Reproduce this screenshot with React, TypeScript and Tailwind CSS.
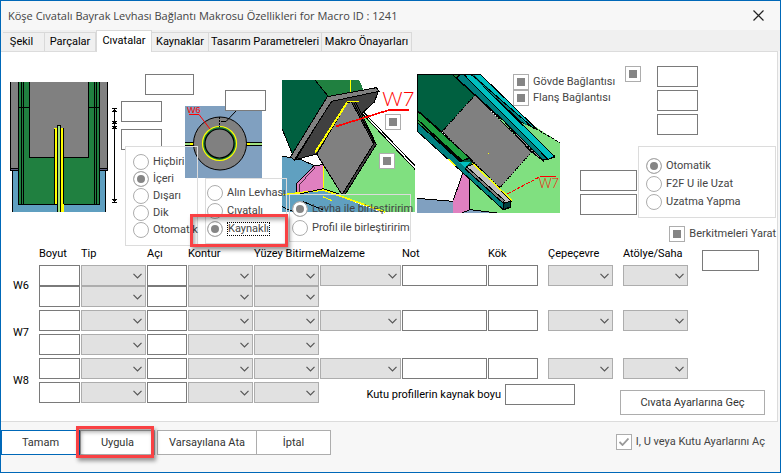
import { useState } from "react"
import type { ReactNode } from "react"

const tabs = [
  { name: "Şekil", className: "w-[42px] pr-1" },
  { name: "Parçalar", className: "w-[51px]" },
  { name: "Cıvatalar", className: "w-[56px]" },
  { name: "Kaynaklar", className: "w-[57px]" },
  { name: "Tasarım Parametreleri", className: "w-[113px]" },
  { name: "Makro Önayarları", className: "w-[90px]" },
]

const weldGrid =
  "grid grid-cols-[25px_41px_65px_40px_65px_65px_81px_minmax(85px,1fr)_50px_8px_65px_8px_65px] gap-x-px"

const TextBox = ({ label, className = "" }: { label: string; className?: string }) => (
  <input
    type="text"
    aria-label={label}
    className={`block h-[21px] border border-[#7a7a7a] bg-white px-1 outline-none ${className}`}
  />
)

const Dropdown = ({ label, className = "" }: { label: string; className?: string }) => (
  <div className={`relative h-[21px] ${className}`}>
    <select
      aria-label={label}
      className="block h-full w-full appearance-none border border-[#adadad] bg-[#e1e1e1] px-1 outline-none"
    />
    <svg
      className="pointer-events-none absolute right-1 top-2 h-[6px] w-[9px]"
      viewBox="0 0 9 6"
      fill="none"
      stroke="#555"
      strokeWidth="1.2"
    >
      <path d="M.5 .8 4.5 4.8 8.5 .8" />
    </svg>
  </div>
)

const markClass =
  "block h-4 w-4 shrink-0 appearance-none border border-[#adadad] bg-white checked:bg-[#858585] checked:shadow-[inset_0_0_0_3px_white]"

const Radio = ({
  name,
  checked,
  children,
  className = "",
}: {
  name: string
  checked?: boolean
  children: ReactNode
  className?: string
}) => (
  <label className={`flex items-center gap-1 whitespace-nowrap text-[#444] ${className}`}>
    <input type="radio" name={name} defaultChecked={checked} className={`rounded-full ${markClass}`} />
    {children}
  </label>
)

const Check = ({ label, hideLabel }: { label: string; hideLabel?: boolean }) => (
  <label className="flex items-center gap-1 whitespace-nowrap text-[#444]">
    <input type="checkbox" defaultChecked aria-label={label} className={markClass} />
    {!hideLabel && label}
  </label>
)

const Highlight = ({ className }: { className: string }) => (
  <div
    className={`pointer-events-none absolute z-20 border-3 border-[#f94144] shadow-[2px_3px_4px_rgba(0,0,0,0.4),inset_2px_3px_4px_rgba(0,0,0,0.35)] ${className}`}
  />
)

const FrontView = () => (
  <svg className="h-[130px] w-[98px]" viewBox="0 0 98 130" shapeRendering="crispEdges">
    <path d="M2 88h94v42H2z" fill="#5f9fc0" />
    <path d="M2.5 88v42M95.5 88v42" stroke="#000" />
    <path d="M0 0h98v89H0z" fill="#808080" />
    <path d="M0 86h98v3H0z" fill="#606080" />
    <path d="M.5 0v89M97.5 0v89M0 86.5h98M0 88.5h98" stroke="#000" />
    <path d="M8 0h82v122H8z" fill="#208040" />
    <path d="M19 0h60v76H19z" fill="#808080" />
    <path
      d="M19.5 0v75.5h59V0M8.5 0v122.5h81V0M11.5 0v122M13.5 0v122M84.5 0v122M86.5 0v122M8 25.5h11M79 25.5h11"
      fill="none"
      stroke="#000"
    />
    <path d="M44 46h10v84h-7v-8h-3z" fill="#ff0" />
    <path d="M44.5 122V46.5M53.5 46v76" stroke="#000" />
    <path d="M47 43h4v87h-4z" fill="#000" />
    <path d="M48 44h2v86h-2z" fill="#a0e080" />
  </svg>
)

const DimensionArrows = () => (
  <svg className="h-[98px] w-[13px]" viewBox="0 0 13 98" shapeRendering="crispEdges" stroke="#000">
    <path d="M6.5 1v95M4 1.5h5M4 16.5h5M4 19.5h5M4 95.5h5" />
    <path d="M3 5h7L6.5 2zM3 14h7l-3.5 3zM3 22h7l-3.5-3zM3 92h7l-3.5 3z" strokeWidth="0" />
  </svg>
)

const PipeView = () => (
  <svg className="h-[72px] w-[77px]" viewBox="0 0 77 72">
    <path d="M0 0h77v72H0z" fill="#80a0c0" />
    <path d="M-1 36.5h79v3H-1z" fill="#a0e080" stroke="#000" />
    <path d="M5 37h4v2H5zM62 37h3v2h-3z" fill="#ff0" />
    <circle cx="35" cy="37.5" r="26.5" fill="#808080" stroke="#000" />
    <circle cx="34.5" cy="37.5" r="17" fill="#208040" stroke="#ff0" strokeWidth="1.2" />
    <circle cx="34.5" cy="37.5" r="14.5" fill="#808080" stroke="#000" strokeWidth="1.2" />
    <path d="M34.5 11v10" stroke="#000" strokeDasharray="2 1" />
    <path d="M36 15.5h5L51 5" fill="none" stroke="#000" />
    <path d="M4 8.5h10L25 23" fill="none" stroke="red" />
    <text x="2" y="7" fontSize="9" fill="red" fontFamily="Liberation Sans, sans-serif">W6</text>
  </svg>
)

const PlateView = () => (
  <svg
    className="h-[132px] w-[133px] overflow-visible"
    viewBox="306 60 399 396"
    strokeWidth="3"
    shapeRendering="crispEdges"
  >
    <path d="M306 60h99l42 50-107 178-34-82z" fill="#006040" />
    <path d="M405 60h132l14 30-107 20z" fill="#208040" />
    <path d="m405 60 42 52M306 206l34 82" stroke="#000" />
    <path d="M510 60v36" stroke="#ff0" />
    <path d="m306 288 60 12 35 16 29 0v75l170 65H306z" fill="#60a0c0" />
    <path d="m306 288 60 12 35 16h29" fill="none" stroke="#000" />
    <path d="m430 312 100-172 175 187v129H605l-175-66z" fill="#80e080" />
    <path d="m527 140 178 188M540 145l165 172" fill="none" stroke="#000" />
    <path d="m402 317 28-3v74l-82 15v-30z" fill="#e080c0" stroke="#000" />
    <path d="m357 404v-28l50-56" fill="none" stroke="#000" strokeWidth="2" />
    <path d="M430 315v75l-120 14M430 390l185 66" fill="none" stroke="#ff0" strokeWidth="5" />
    <path d="m306 440 32 14M350 404l80-18 56 19M370 425l60 25" fill="none" stroke="#000" />
    <path d="m428 410 28 12" stroke="#ff0" />
    <path d="m453 122 142-28-12 32-170 155-66 18z" fill="#404040" stroke="#000" />
    <path d="m416 283-4 14 18 16v-24z" fill="#fff" />
    <path d="m442 110 147-27 8 11-142 30-112 176-11-10z" fill="#808080" stroke="#000" />
    <path d="m512 125 13-2 64 130-94 151-10 0z" fill="#404040" stroke="#000" />
    <path d="m502 128 12-3 67 126-95 153-76-122z" fill="#808080" stroke="#000" />
    <path d="m521 128 63 121" stroke="#000" />
    <path d="M501 128 405 278" stroke="#ff0" strokeWidth="6" />
    <path d="M502 123h34" stroke="#ff0" />
    <path d="m469 199 158-49h60" fill="none" stroke="red" strokeWidth="5" />
    <text x="607" y="139" fontSize="60" fontWeight="300" fill="red" fontFamily="Lato, sans-serif">
      W7
    </text>
  </svg>
)

const BeamView = () => (
  <svg
    className="h-[139px] w-[143px]"
    viewBox="51 42 429 417"
    strokeWidth="3"
    shapeRendering="crispEdges"
  >
    <path d="m300 140 60 30 120 78v211H208V330z" fill="#80e080" />
    <path d="m345 170 135 78" stroke="#000" strokeDasharray="9 5" />
    <path d="m190 335 18 20v104h-50v-38z" fill="#e080c0" />
    <path d="m190 335-30 85M158 459v-35M208 355v95" stroke="#000" />
    <path d="m51 415 107 9v35H51zM185 459l25-10 80 10z" fill="#80a0c0" />
    <path d="m51 415 107 9M185 459l25-10 80 10" fill="none" stroke="#000" />
    <path d="M51 42h110l70 65-105 108-75-65z" fill="#006040" stroke="#000" />
    <path d="m315 188 90 85 32 15-7 15-36-28z" fill="#a0a0a0" stroke="#000" />
    <path d="M155 42h25l170 155-50-22z" fill="#208040" stroke="#000" />
    <path d="m225 105 170 171-95 107-174-168z" fill="#808080" stroke="#000" strokeDasharray="6 2" />
    <path d="m310 190 95 90" stroke="#000" strokeDasharray="6 4" />
    <path d="M181 42h25l257 250-34 8-115-115-144-131z" fill="#008080" stroke="#000" />
    <path d="M190 42h22l252 247-20 9z" fill="#00c0c0" stroke="#000" />
    <path d="M212 42h28l172 167-50-24z" fill="#00c0c0" stroke="#000" />
    <path d="m220 47 160 148" stroke="#008080" strokeWidth="6" />
    <path d="m213 42 188 163" stroke="#000" />
    <path d="m51 152 156 140-20 14L51 187z" fill="#20a040" stroke="#000" />
    <path d="m51 177 135 124 24-5 10 18-20 6z" fill="#006040" stroke="#000" />
    <path d="m51 187 146 133 135 103-2 20-20 6L51 213z" fill="#008080" stroke="#000" />
    <path d="m175 305 35 1-15 15z" fill="#00c0c0" />
    <path d="m200 320 20-8 115 111-20 7z" fill="#c0c0c0" stroke="#000" />
    <path d="m197 328 113 102 3-9-113-101z" fill="#808080" stroke="#000" />
    <path d="m310 430 22-6v16l-20 8z" fill="#004040" stroke="#000" />
    <path d="m217 310 120 112" stroke="#ff0" strokeWidth="4" />
    <path d="m145 297 22 21" stroke="#ff0" />
    <path d="M264 281h3" stroke="#ff0" />
    <path d="m322 402 98-52" stroke="red" strokeDasharray="12 4" />
    <path d="M420 350h48" stroke="red" />
    <text x="416" y="385" fontSize="38" fontWeight="300" fill="red" fontFamily="Lato, sans-serif">W7</text>
  </svg>
)

const WeldRows = ({ name, tight }: { name: string; tight?: boolean }) => (
  <div className={`${weldGrid} ${tight ? "" : "gap-y-[3px]"}`}>
    <span className="row-span-2 self-center">{name}</span>
    <TextBox label={`${name} Boyut 1`} />
    <Dropdown label={`${name} Tip 1`} />
    <TextBox label={`${name} Açı 1`} />
    <Dropdown label={`${name} Kontur 1`} />
    <Dropdown label={`${name} Yüzey Bitirme 1`} />
    <Dropdown label={`${name} Malzeme`} />
    <TextBox label={`${name} Not`} className="w-full" />
    <TextBox label={`${name} Kök`} />
    <Dropdown label={`${name} Çepeçevre`} className="col-start-11" />
    <Dropdown label={`${name} Atölye/Saha`} className="col-start-13" />
    <TextBox label={`${name} Boyut 2`} className="col-start-2" />
    <Dropdown label={`${name} Tip 2`} />
    <TextBox label={`${name} Açı 2`} />
    <Dropdown label={`${name} Kontur 2`} />
    <Dropdown label={`${name} Yüzey Bitirme 2`} />
  </div>
)

const Connection = () => (
  <section className="flex items-start pl-[9px] pt-[14px]">
    <div className="mt-4 shrink-0">
      <FrontView />
    </div>
    <div className="mt-[41px] shrink-0">
      <DimensionArrows />
    </div>

    <div className="relative mt-2 w-[73px] shrink-0">
      <TextBox label="Levha kalınlığı" className="ml-6 w-[49px]" />
      <TextBox label="Üst mesafe" className="mt-1.5 w-[41px]" />
      <TextBox label="Alt mesafe" className="mt-[7px] w-[41px]" />
      <fieldset className="absolute left-1 top-[72px] z-10 w-[73px] min-w-0 border border-[#dcdcdc]">
        <div className="flex w-[59px] flex-col gap-px bg-white py-[7px] pl-[7px]">
          <Radio name="side">Hiçbiri</Radio>
          <Radio name="side" checked>İçeri</Radio>
          <Radio name="side">Dışarı</Radio>
          <Radio name="side">Dik</Radio>
          <Radio name="side">Otomatik</Radio>
        </div>
      </fieldset>
    </div>

    <div className="relative -ml-[9px] mt-10 shrink-0">
      <PipeView />
      <TextBox label="Boru payı" className="absolute -top-4 left-10 w-[41px]" />
      <fieldset className="absolute left-5 top-[72px] z-10 flex w-[82px] min-w-0 flex-col gap-[2px] border border-[#dcdcdc] py-[6px] pl-[1px]">
        <Radio name="endType">Alın Levhası</Radio>
        <Radio name="endType">Cıvatalı</Radio>
        <Radio name="endType" checked>
          <span className="border border-dotted border-black leading-3">Kaynaklı</span>
        </Radio>
      </fieldset>
      <Highlight className="left-[5px] top-[108px] h-[33px] w-[98px]" />
    </div>

    <div className="relative ml-5 mt-3.5 shrink-0">
      <PlateView />
      <div className="absolute left-[103px] top-[34px]">
        <Check label="Levha üst kaynağı" hideLabel />
      </div>
      <div className="absolute left-[97px] top-[73px]">
        <Check label="Levha alt kaynağı" hideLabel />
      </div>
      <fieldset className="absolute left-[7px] top-[114px] z-10 flex w-[122px] min-w-0 flex-col gap-[3px] border border-[#dcdcdc] pb-[5px] pl-[2px] pt-[6px]">
        <Radio name="joinBy" checked>Levha ile birleştiririm</Radio>
        <Radio name="joinBy">Profil ile birleştiririm</Radio>
      </fieldset>
    </div>

    <div className="relative ml-[2px] mt-2 shrink-0">
      <BeamView />
      <div className="absolute left-24 top-0 flex flex-col">
        <Check label="Gövde Bağlantısı" />
        <Check label="Flanş Bağlantısı" />
      </div>
    </div>

    <div className="grow pr-px">
      <div className="flex items-start gap-4 pl-[65px]">
        <Check label="Berkitme payı" hideLabel />
        <div className="flex flex-col gap-[3px]">
          <TextBox label="Pay 1" className="w-[41px]" />
          <TextBox label="Pay 2" className="w-[41px]" />
          <TextBox label="Pay 3" className="w-[41px]" />
        </div>
      </div>
      <div className="mt-[11px] flex items-start gap-px pl-5">
        <div className="mt-6 flex flex-col gap-[3px]">
          <TextBox label="Uzatma 1" className="w-[57px]" />
          <TextBox label="Uzatma 2" className="w-[57px]" />
        </div>
        <fieldset className="flex grow flex-col gap-[2px] border border-[#dcdcdc] pb-[7px] pl-[7px] pt-[11px]">
          <Radio name="extend" checked>Otomatik</Radio>
          <Radio name="extend">F2F U ile Uzat</Radio>
          <Radio name="extend">Uzatma Yapma</Radio>
        </fieldset>
      </div>
      <div className="mt-2 flex justify-end">
        <Check label="Berkitmeleri Yarat" />
      </div>
    </div>
  </section>
)

const Welds = () => (
  <section className="pb-1.5 pl-[12px] pr-[19px]">
    <div className="flex items-start gap-[14px]">
      <div className="grow">
        <div className={`${weldGrid} h-[23px] items-center whitespace-nowrap`}>
          <span className="col-start-2">Boyut</span>
          <span>Tip</span>
          <span>Açı</span>
          <span>Kontur</span>
          <span>Yüzey Bitirme</span>
          <span>Malzeme</span>
          <span>Not</span>
          <span>Kök</span>
          <span className="col-start-11">Çepeçevre</span>
          <span className="col-start-13">Atölye/Saha</span>
        </div>
        <div className="flex flex-col gap-[3px]">
          <WeldRows name="W6" tight />
          <WeldRows name="W7" />
          <WeldRows name="W8" />
        </div>
      </div>
      <TextBox label="Berkitme boyu" className="mt-[8px] w-[57px]" />
    </div>
    <div className="-mr-[7px] -mt-[19px] flex items-start justify-end">
      <label className="flex items-center gap-1">
        Kutu profillerin kaynak boyu
        <input type="text" className="h-[21px] w-[70px] border border-[#7a7a7a] bg-white px-1 outline-none" />
      </label>
      <button className="ml-[45px] mt-1.5 h-[25px] w-[145px] border border-[#adadad] bg-white text-[#333]">
        Cıvata Ayarlarına Geç
      </button>
    </div>
  </section>
)

const App = () => {
  const [activeTab, setActiveTab] = useState("Cıvatalar")

  return (
    <div className="border border-[#0068b8] bg-[#f7f7f7] font-[Roboto,'Liberation_Sans',sans-serif] text-[11px] leading-4 text-black">
      <header className="flex h-[29px] items-center justify-between pl-[7px] pr-4 font-['Open_Sans',sans-serif] text-[11px] text-[#444]">
        <h1>Köşe Cıvatalı Bayrak Levhası Bağlantı Makrosu Özellikleri for Macro ID : 1241</h1>
        <button aria-label="Kapat">
          <svg className="h-[11px] w-[11px]" viewBox="0 0 11 11" stroke="#222" strokeWidth="1.2">
            <path d="m.5.5 10 10M10.5.5l-10 10" />
          </svg>
        </button>
      </header>

      <nav className="flex h-[21px] items-end bg-[#f0f0f0] pl-[2px]">
        {tabs.map((tab) => (
          <button
            key={tab.name}
            onClick={() => setActiveTab(tab.name)}
            className={`whitespace-nowrap border-[#d9d9d9] ${tab.className} ${
              activeTab === tab.name
                ? "relative -mb-px h-[22px] border-x border-t bg-white pb-0.5"
                : "h-[19px] border-r border-t bg-[#f0f0f0]"
            }`}
          >
            {tab.name}
          </button>
        ))}
      </nav>

      <main className="mr-[2px] border-b border-r border-t border-[#dcdcdc] bg-white">
        <Connection />
        <Welds />
      </main>

      <footer className="flex items-start justify-between pb-[17px] pr-[15px] pt-2 text-[#333]">
        <div className="flex">
          <button className="h-[25px] w-[79px] border border-[#0068b8] bg-white">Tamam</button>
          <div className="relative mr-[2px]">
            <button className="h-[25px] w-[75px] border border-[#adadad] bg-white">Uygula</button>
            <Highlight className="-bottom-[3px] -left-1 -top-1 right-px" />
          </div>
          <button className="h-[25px] w-[100px] border border-[#adadad] bg-white">Varsayılana Ata</button>
          <button className="-ml-px h-[25px] w-[75px] border border-[#adadad] bg-white">İptal</button>
        </div>
        <label className="relative mt-1 flex items-center gap-1 text-[#444]">
          <input
            type="checkbox"
            defaultChecked
            className="peer h-4 w-4 appearance-none border border-[#adadad] bg-white"
          />
          <svg
            className="pointer-events-none absolute left-[3px] top-1 hidden h-2 w-[10px] peer-checked:block"
            viewBox="0 0 10 8"
            fill="none"
            stroke="#999"
            strokeWidth="1.8"
          >
            <path d="m.5 4 3 3 6-6.5" />
          </svg>
          I, U veya Kutu Ayarlarını Aç
        </label>
      </footer>
    </div>
  )
}

export default App
